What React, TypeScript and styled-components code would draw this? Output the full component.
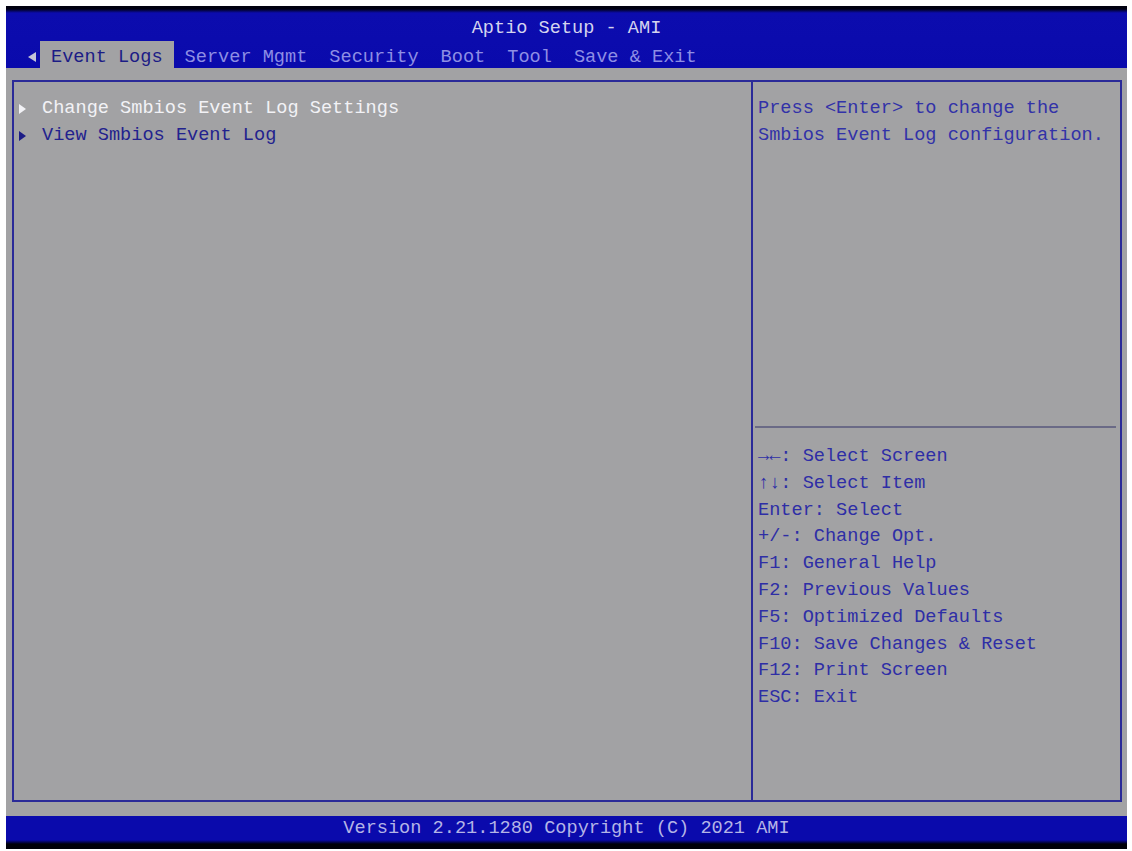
import React from 'react';
import styled, { createGlobalStyle } from 'styled-components';

const GlobalStyle = createGlobalStyle`
  html, body {
    margin: 0;
    padding: 0;
    background: #ffffff;
  }
  * {
    box-sizing: border-box;
  }
`;

const FONT = `"Liberation Mono", "DejaVu Sans Mono", monospace`;

const Screen = styled.div`
  width: 1121px;
  height: 843px;
  margin: 6px 0 0 6px;
  display: flex;
  flex-direction: column;
  font-family: ${FONT};
  font-size: 18.6px;
  background: #a2a2a4;
`;

const Header = styled.div`
  height: 62px;
  background: linear-gradient(#000010 0, #000010 3px, #0c0cae 7px, #0a0aac 100%);
  display: flex;
  flex-direction: column;
`;

const Title = styled.div`
  height: 35px;
  padding-top: 9px;
  text-align: center;
  color: #d4d4ee;
  line-height: 27px;
`;

const TabRow = styled.div`
  display: flex;
  align-items: stretch;
  height: 27px;
  margin-top: auto;
  padding-left: 22px;
`;

const LeftArrow = styled.span`
  align-self: center;
  width: 0;
  height: 0;
  margin-top: 4px;
  border-top: 5px solid transparent;
  border-bottom: 5px solid transparent;
  border-right: 8px solid #c4c4d8;
  margin-right: 4px;
`;

const Tab = styled.div<{ $active?: boolean }>`
  padding: 3px 11px 0;
  line-height: 27px;
  white-space: pre;
  background: ${p => (p.$active ? '#a2a2a4' : 'transparent')};
  color: ${p => (p.$active ? '#1c1c86' : '#8e8ee4')};
`;

const Main = styled.div`
  flex: 1;
  padding: 12px 5px 14px 6px;
  display: flex;
`;

const Panel = styled.div`
  flex: 1;
  display: flex;
  border: 2px solid #2a2a98;
`;

const LeftPane = styled.div`
  width: 739px;
  border-right: 2px solid #2a2a98;
  padding: 13px 0 0 5px;
`;

const MenuItem = styled.div<{ $selected?: boolean }>`
  display: flex;
  align-items: center;
  height: 27px;
  color: ${p => (p.$selected ? '#f2f2f6' : '#22228e')};
`;

const Pointer = styled.span<{ $selected?: boolean }>`
  width: 0;
  height: 0;
  border-top: 5px solid transparent;
  border-bottom: 5px solid transparent;
  border-left: 7px solid ${p => (p.$selected ? '#f2f2f6' : '#1c1c86')};
  margin-right: 16px;
`;

const RightPane = styled.div`
  flex: 1;
  display: flex;
  flex-direction: column;
`;

const HelpBox = styled.div`
  height: 346px;
  padding: 13px 0 0 3px;
  color: #3232a8;
  line-height: 27px;
  border-bottom: 2px solid #6a6a86;
  margin: 0 4px 0 2px;
`;

const KeyList = styled.div`
  padding: 16px 0 0 5px;
`;

const KeyLine = styled.div`
  height: 26.8px;
  line-height: 26.8px;
  color: #2e2ea6;
  white-space: pre;
`;

const Footer = styled.div`
  height: 33px;
  background: linear-gradient(#0a0aac 0, #0a0aac 24px, #000008 28px, #000008 100%);
  color: #b4b4e6;
  text-align: center;
  line-height: 26px;
`;

const keys = [
  '\u2192\u2190: Select Screen',
  '\u2191\u2193: Select Item',
  'Enter: Select',
  '+/-: Change Opt.',
  'F1: General Help',
  'F2: Previous Values',
  'F5: Optimized Defaults',
  'F10: Save Changes & Reset',
  'F12: Print Screen',
  'ESC: Exit',
];

const tabs = ['Event Logs', 'Server Mgmt', 'Security', 'Boot', 'Tool', 'Save & Exit'];

const App: React.FC = () => (
  <>
    <GlobalStyle />
    <Screen>
      <Header>
        <Title>Aptio Setup - AMI</Title>
        <TabRow>
          <LeftArrow />
          {tabs.map((t, i) => (
            <Tab key={t} $active={i === 0}>
              {t}
            </Tab>
          ))}
        </TabRow>
      </Header>
      <Main>
        <Panel>
          <LeftPane>
            <MenuItem $selected>
              <Pointer $selected />
              Change Smbios Event Log Settings
            </MenuItem>
            <MenuItem>
              <Pointer />
              View Smbios Event Log
            </MenuItem>
          </LeftPane>
          <RightPane>
            <HelpBox>
              Press &lt;Enter&gt; to change the
              <br />
              Smbios Event Log configuration.
            </HelpBox>
            <KeyList>
              {keys.map(k => (
                <KeyLine key={k}>{k}</KeyLine>
              ))}
            </KeyList>
          </RightPane>
        </Panel>
      </Main>
      <Footer>Version 2.21.1280 Copyright (C) 2021 AMI</Footer>
    </Screen>
  </>
);

export default App;
